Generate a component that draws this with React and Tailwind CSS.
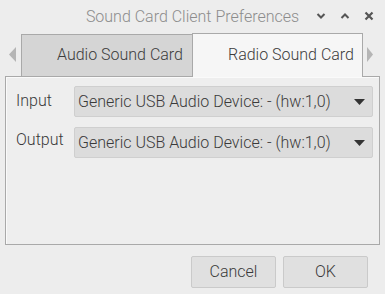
import React from 'react';

function TriangleDown({ className }) {
  return (
    <svg width="11" height="6" viewBox="0 0 11 6" className={className}>
      <path d="M0 0 L11 0 L5.5 6 Z" fill="#333333" />
    </svg>
  );
}

function Combo({ value }) {
  return (
    <div className="flex h-[31px] w-[299px] items-center justify-between rounded-[2px] border border-[#cfcfcf] bg-[#dcdcdc] pl-[3px] pr-[7px]">
      <span className="text-[16px] text-[#3a3a3a]">{value}</span>
      <TriangleDown />
    </div>
  );
}

export default function App() {
  const device = 'Generic USB Audio Device: - (hw:1,0)';

  return (
    <div
      className="relative flex h-[294px] w-[385px] flex-col overflow-hidden bg-[#ededed] font-light"
      style={{ fontFamily: 'Roboto, "Noto Sans", sans-serif' }}
    >
      {/* Title bar */}
      <div className="relative flex h-[33px] shrink-0 items-center justify-center">
        <span className="text-[16px] text-[#8c8c8c]">Sound Card Client Preferences</span>
        <div className="absolute right-[10px] top-[10px] flex items-center gap-[12px]">
          <svg width="12" height="12" viewBox="0 0 12 12">
            <path d="M2.5 4 L6 7.5 L9.5 4" stroke="#555" strokeWidth="2" fill="none" />
          </svg>
          <svg width="12" height="12" viewBox="0 0 12 12">
            <path d="M2.5 8 L6 4.5 L9.5 8" stroke="#555" strokeWidth="2" fill="none" />
          </svg>
          <svg width="12" height="12" viewBox="0 0 12 12">
            <path d="M2.5 2.5 L9.5 9.5 M9.5 2.5 L2.5 9.5" stroke="#555" strokeWidth="2.2" fill="none" />
          </svg>
        </div>
      </div>

      {/* Tabs */}
      <div className="flex h-[43px] shrink-0 items-end">
        <div className="flex h-full w-[21px] items-center justify-center pl-[4px]">
          <svg width="8" height="15" viewBox="0 0 8 15">
            <path d="M7 0 L7 15 L0 7.5 Z" fill="#b5b5b5" />
          </svg>
        </div>
        <div className="flex h-[42px] w-[171px] items-center justify-end border-l border-t border-[#a9a9a9] bg-[#d5d5d5] pb-[2px] pr-[9px]">
          <span className="text-[16px] text-[#3c3c3c]">Audio Sound Card</span>
        </div>
        <div className="relative z-10 mb-[-1px] flex h-[44px] w-[171px] items-center justify-end border-x border-t border-[#a9a9a9] bg-[#f6f6f6] pb-[2px] pr-[8px]">
          <span className="text-[16px] text-[#3c3c3c]">Radio Sound Card</span>
        </div>
        <div className="flex h-full flex-1 items-center pl-[4px]">
          <svg width="6" height="15" viewBox="0 0 6 15">
            <path d="M0 0 L0 15 L6 7.5 Z" fill="#b5b5b5" />
          </svg>
        </div>
      </div>

      {/* Panel */}
      <div className="mx-[5px] flex h-[169px] shrink-0 flex-col gap-[10px] border border-[#a9a9a9] bg-[#eeeeee] pl-[10px] pt-[9px] shadow-[inset_1px_1px_0_#fafafa]">
        <div className="flex items-start">
          <span className="w-[58px] pt-[3px] text-[16px] text-[#3a3a3a]">Input</span>
          <Combo value={device} />
        </div>
        <div className="flex items-start">
          <span className="w-[58px] pt-[1px] text-[16px] text-[#3a3a3a]">Output</span>
          <Combo value={device} />
        </div>
      </div>

      {/* Buttons */}
      <div className="flex justify-end gap-[7px] pr-[17px] pt-[11px]">
        <button className="h-[32px] w-[85px] rounded-[2px] border border-[#cacaca] bg-[#e0e0e0] text-[16px] text-[#3a3a3a]">
          Cancel
        </button>
        <button className="h-[32px] w-[85px] rounded-[2px] border border-[#cacaca] bg-[#e0e0e0] text-[16px] text-[#3a3a3a]">
          OK
        </button>
      </div>
    </div>
  );
}
